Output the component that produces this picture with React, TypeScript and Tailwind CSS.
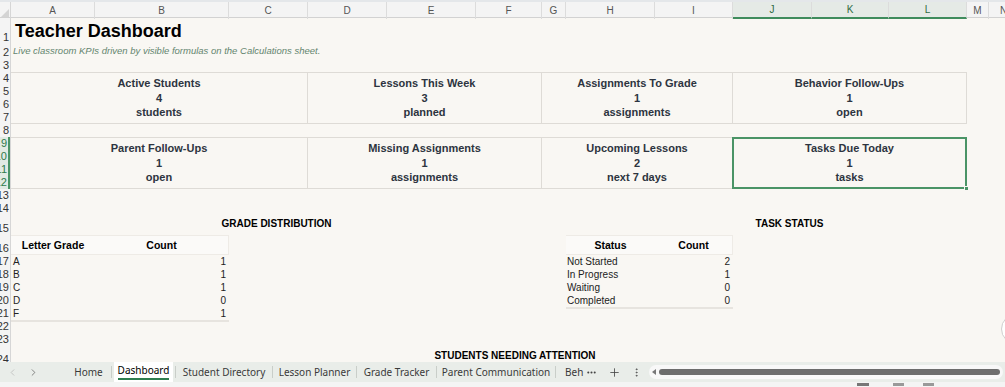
import React from 'react';
import { ChevronLeft, ChevronRight, Plus, MoreVertical, MoreHorizontal } from 'lucide-react';

const columns = [
    { label: 'A', sel: false }, { label: 'B', sel: false }, { label: 'C', sel: false },
    { label: 'D', sel: false }, { label: 'E', sel: false }, { label: 'F', sel: false },
    { label: 'G', sel: false }, { label: 'H', sel: false }, { label: 'I', sel: false },
    { label: 'J', sel: true }, { label: 'K', sel: true }, { label: 'L', sel: true },
    { label: 'M', sel: false }, { label: 'N', sel: false },
];

const rows = [
    { n: '1', h: 'h-[26px]' }, { n: '2', h: 'h-[15px]' }, { n: '3', h: 'h-[13px]' },
    { n: '4', h: 'h-[13px]' }, { n: '5', h: 'h-[13px]' }, { n: '6', h: 'h-[13px]' },
    { n: '7', h: 'h-[13px]' }, { n: '8', h: 'h-[13px]' }, { n: '9', h: 'h-[13px]', sel: true },
    { n: '10', h: 'h-[13px]', sel: true }, { n: '11', h: 'h-[13px]', sel: true }, { n: '12', h: 'h-[13px]', sel: true },
    { n: '13', h: 'h-[13px]' }, { n: '14', h: 'h-[13px]' }, { n: '15', h: 'h-[20px]' },
    { n: '16', h: 'h-[20px]' }, { n: '17', h: 'h-[13px]' }, { n: '18', h: 'h-[13px]' },
    { n: '19', h: 'h-[13px]' }, { n: '20', h: 'h-[13px]' }, { n: '21', h: 'h-[13px]' },
    { n: '22', h: 'h-[13px]' }, { n: '23', h: 'h-[13px]' }, { n: '24', h: 'h-[20px]' },
];

const grades = [
    { g: 'A', c: 1, pos: 'row-start-17' },
    { g: 'B', c: 1, pos: 'row-start-18' },
    { g: 'C', c: 1, pos: 'row-start-19' },
    { g: 'D', c: 0, pos: 'row-start-20' },
    { g: 'F', c: 1, pos: 'row-start-21' },
];

const tasks = [
    { s: 'Not Started', c: 2, pos: 'row-start-17' },
    { s: 'In Progress', c: 1, pos: 'row-start-18' },
    { s: 'Waiting', c: 0, pos: 'row-start-19' },
    { s: 'Completed', c: 0, pos: 'row-start-20' },
];

const Kpi = ({ title, value, unit, pos, selected }: any) => (
    <div className={`${pos} relative flex flex-col items-center justify-center border-y border-r border-[#dedbd6] text-[11px] font-bold leading-[14.5px] text-[#2d3440]`}>
        <span>{title}</span>
        <span>{value}</span>
        <span>{unit}</span>
        {selected && (
            <>
                <div className="absolute -inset-px border-2 border-[#4a9466]" />
                <div className="absolute -right-[3px] -bottom-[3px] w-[5px] h-[5px] bg-[#4a9466] border border-[#f9f7f3]" />
            </>
        )}
    </div>
);

const Tab = ({ children, w }: any) => (
    <div className={`${w} h-full flex items-center justify-center text-[#3a3a3a] whitespace-nowrap`}>{children}</div>
);

const Sep = () => <div className="w-px h-[12px] bg-[#c9cec9]" />;

export default function App() {
    return (
        <div className="relative w-[1005px] h-[387px] overflow-hidden bg-[#f9f7f3] font-['Liberation_Sans',Arial,sans-serif] flex flex-col">
            {/* column headers */}
            <div className="h-[18px] shrink-0 border-t-2 border-[#e4e7ea] bg-[#f4f4f4] border-b border-b-[#d2d2d2] grid grid-cols-[11px_84px_134px_79px_79px_89px_66px_24px_89px_78px_79px_77px_78px_22px_30px]">
                <div className="relative border-r border-[#d6d6d6]">
                    <div className="absolute right-[1px] bottom-[2px] w-0 h-0 border-l-[8px] border-l-transparent border-b-[8px] border-b-[#d4d4d4]" />
                </div>
                {columns.map((c) => (
                    <div
                        key={c.label}
                        className={`flex items-center justify-center text-[10px] border-r border-[#dcdcdc] ${c.sel ? 'bg-[#e5eae6] text-[#2f6b45] border-b-2 border-b-[#3f8c5d]' : 'text-[#555]'}`}
                    >
                        {c.label}
                    </div>
                ))}
            </div>

            {/* sheet body */}
            <div className="flex-1 min-h-0 flex overflow-hidden">
                <div className="w-[11px] shrink-0 bg-[#f4f4f4] border-r border-[#d6d6d6] flex flex-col">
                    {rows.map((r) => (
                        <div
                            key={r.n}
                            className={`${r.h} shrink-0 flex items-end justify-end pr-[1px] pb-[1px] text-[11px] leading-[12px] whitespace-nowrap ${r.sel ? 'bg-[#e1eae3] text-[#2f7a4b] border-r-2 border-[#4a9466]' : 'text-[#333]'}`}
                        >
                            {r.n}
                        </div>
                    ))}
                </div>

                <div className="grid content-start grid-cols-[84px_134px_79px_79px_89px_66px_24px_89px_78px_79px_77px_78px_22px_30px] grid-rows-[26px_15px_13px_13px_13px_13px_13px_13px_13px_13px_13px_13px_13px_13px_20px_20px_13px_13px_13px_13px_13px_13px_13px_20px]">
                    <div className="col-start-1 col-span-8 row-start-1 flex items-center pl-[4px] pt-[1px] text-[18px] font-bold text-black whitespace-nowrap">
                        Teacher Dashboard
                    </div>
                    <div className="col-start-1 col-span-8 row-start-2 flex items-center pl-[2px] text-[9.5px] italic text-[#64856f] whitespace-nowrap">
                        Live classroom KPIs driven by visible formulas on the Calculations sheet.
                    </div>

                    <Kpi pos="col-start-1 col-span-3 row-start-4 row-span-4" title="Active Students" value="4" unit="students" />
                    <Kpi pos="col-start-4 col-span-3 row-start-4 row-span-4" title="Lessons This Week" value="3" unit="planned" />
                    <Kpi pos="col-start-7 col-span-3 row-start-4 row-span-4" title="Assignments To Grade" value="1" unit="assignments" />
                    <Kpi pos="col-start-10 col-span-3 row-start-4 row-span-4" title="Behavior Follow-Ups" value="1" unit="open" />

                    <Kpi pos="col-start-1 col-span-3 row-start-9 row-span-4" title="Parent Follow-Ups" value="1" unit="open" />
                    <Kpi pos="col-start-4 col-span-3 row-start-9 row-span-4" title="Missing Assignments" value="1" unit="assignments" />
                    <Kpi pos="col-start-7 col-span-3 row-start-9 row-span-4" title="Upcoming Lessons" value="2" unit="next 7 days" />
                    <Kpi pos="col-start-10 col-span-3 row-start-9 row-span-4" title="Tasks Due Today" value="1" unit="tasks" selected />

                    <div className="col-start-1 col-span-6 row-start-15 flex items-center justify-center pb-[4px] text-[10px] font-bold text-black">
                        GRADE DISTRIBUTION
                    </div>
                    <div className="col-start-8 col-span-7 row-start-15 flex items-center justify-center pb-[4px] pr-[6px] text-[10px] font-bold text-black">
                        TASK STATUS
                    </div>

                    {/* grade table */}
                    <div className="col-start-1 row-start-16 flex items-center justify-center pt-[1px] bg-[#fbfaf8] border-t border-b border-[#eeebe6] text-[10.5px] font-bold text-black">
                        Letter Grade
                    </div>
                    <div className="col-start-2 row-start-16 flex items-center justify-center pt-[1px] bg-[#fbfaf8] border-t border-b border-r border-[#eeebe6] text-[10.5px] font-bold text-black">
                        Count
                    </div>
                    {grades.map((g) => (
                        <React.Fragment key={g.g}>
                            <div className={`${g.pos} col-start-1 flex items-center pl-[2px] text-[10px] text-[#222]`}>{g.g}</div>
                            <div className={`${g.pos} col-start-2 flex items-center justify-end pr-[3px] text-[10px] text-[#222]`}>{g.c}</div>
                        </React.Fragment>
                    ))}
                    <div className="col-start-1 col-span-2 row-start-22 border-t-2 border-[#e7e4df]" />

                    {/* task table */}
                    <div className="col-start-8 row-start-16 flex items-center justify-center pt-[1px] bg-[#fbfaf8] border-t border-b border-[#eeebe6] text-[10.5px] font-bold text-black">
                        Status
                    </div>
                    <div className="col-start-9 row-start-16 flex items-center justify-center pt-[1px] bg-[#fbfaf8] border-t border-b border-r border-[#eeebe6] text-[10.5px] font-bold text-black">
                        Count
                    </div>
                    {tasks.map((t) => (
                        <React.Fragment key={t.s}>
                            <div className={`${t.pos} col-start-8 flex items-center pl-[1px] text-[10px] text-[#222] whitespace-nowrap`}>{t.s}</div>
                            <div className={`${t.pos} col-start-9 flex items-center justify-end pr-[3px] text-[10px] text-[#222]`}>{t.c}</div>
                        </React.Fragment>
                    ))}
                    <div className="col-start-8 col-span-2 row-start-21 border-t-2 border-[#e7e4df]" />

                    <div className="col-start-1 col-span-14 row-start-24 flex items-start justify-center pt-[2px] text-[10px] font-bold text-black whitespace-nowrap">
                        STUDENTS NEEDING ATTENTION
                    </div>
                </div>
            </div>

            {/* sheet tabs */}
            <div className="h-[20px] shrink-0 bg-[#e9ede9] flex items-center font-['Noto_Sans',sans-serif] text-[10px]">
                <div className="w-[22px] flex justify-center pl-[2px] text-[#b3b3b3]"><ChevronLeft size={11} strokeWidth={1.5} /></div>
                <div className="w-[20px] flex justify-center pl-[2px] text-[#555]"><ChevronRight size={11} strokeWidth={1.5} /></div>
                <div className="w-[24px]" />
                <Tab w="w-[45px]">Home</Tab>
                <Sep />
                <div className="ml-[2px] w-[59px] h-full bg-white flex flex-col items-center justify-center text-black">
                    <span className="leading-[13px] border-b-2 border-[#2e7d4f] pb-[1px]">Dashboard</span>
                </div>
                <div className="w-[2px]" />
                <Sep />
                <Tab w="w-[96px]">Student Directory</Tab>
                <Sep />
                <Tab w="w-[83px]">Lesson Planner</Tab>
                <Sep />
                <Tab w="w-[79px]">Grade Tracker</Tab>
                <Sep />
                <Tab w="w-[118px]">Parent Communication</Tab>
                <Sep />
                <div className="w-[24px] pl-[9px] text-[#3a3a3a]">Beh</div>
                <div className="w-[22px] flex justify-center text-[#444]"><MoreHorizontal size={11} strokeWidth={2.5} /></div>
                <div className="w-[24px] flex justify-center text-[#444]"><Plus size={13} strokeWidth={1.5} /></div>
                <div className="w-[20px] flex justify-center text-[#555]"><MoreVertical size={11} strokeWidth={2} /></div>
                <div className="ml-[3px] mr-[2px] flex-1 h-[14px] rounded-full bg-[#f8f8f8] flex items-center pl-[3px] pr-[3px] gap-[3px]">
                    <div className="w-0 h-0 border-y-[3px] border-y-transparent border-r-[4px] border-r-[#777]" />
                    <div className="flex-1 h-[6px] rounded-full bg-[#6d6d6d]" />
                </div>
            </div>

            {/* status bar peek */}
            <div className="h-[5px] shrink-0 bg-[#f4f4f4] flex items-start">
                <div className="ml-[857px] mt-[1px] w-[12px] h-[3px] bg-[#777]" />
                <div className="ml-[24px] mt-[1px] w-[11px] h-[3px] bg-[#999]" />
                <div className="ml-[19px] mt-[1px] w-[11px] h-[3px] bg-[#999]" />
            </div>

            {/* floating button peeking at the right edge */}
            <div className="absolute left-[1001px] top-[314px] w-[30px] h-[30px] rounded-full bg-white border border-[#cfcfcf]" />
        </div>
    );
}
